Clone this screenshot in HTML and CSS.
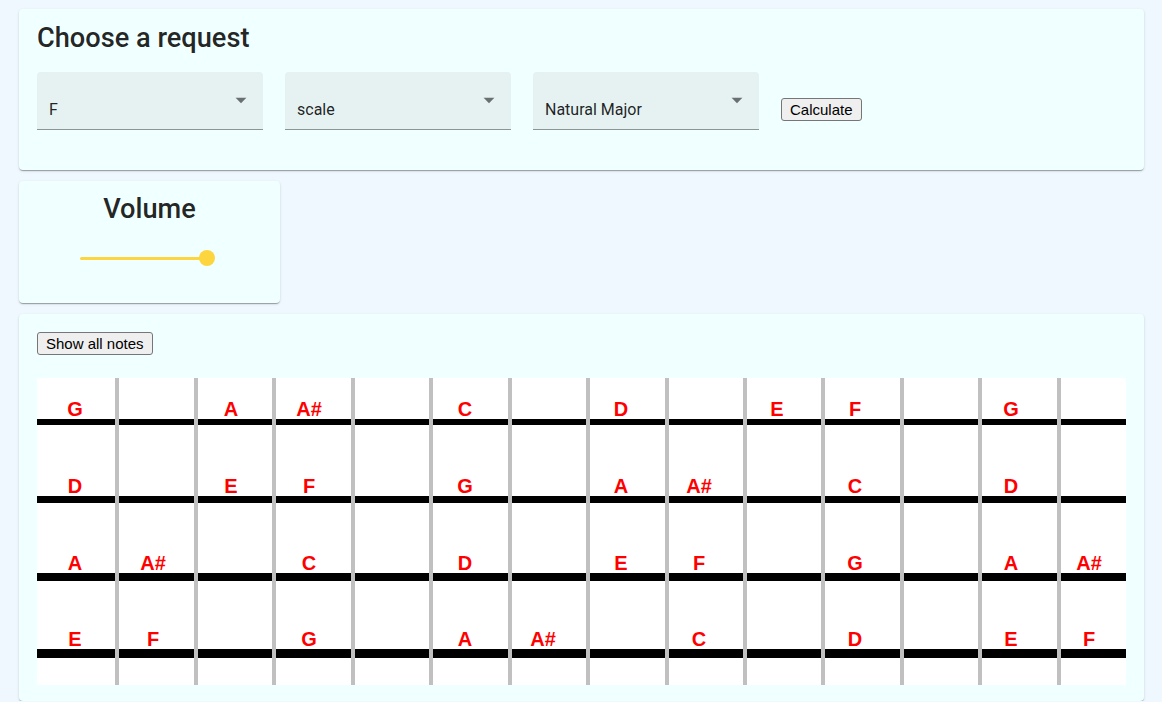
FILE: index.html
```html
<!DOCTYPE html>
<html lang="en">
<head>
<meta charset="utf-8">
<title>Fretboard</title>
<link rel="stylesheet" href="styles.css">
</head>
<body>
<div class="page">
  <section class="card card-request">
    <h2 class="card-title">Choose a request</h2>
    <div class="request-row">
      <div class="select"><span class="select-value">F</span><svg class="select-arrow" viewBox="0 0 24 24"><path d="M7 10l5 5 5-5z"/></svg></div>
      <div class="select"><span class="select-value">scale</span><svg class="select-arrow" viewBox="0 0 24 24"><path d="M7 10l5 5 5-5z"/></svg></div>
      <div class="select"><span class="select-value">Natural Major</span><svg class="select-arrow" viewBox="0 0 24 24"><path d="M7 10l5 5 5-5z"/></svg></div>
      <button class="btn">Calculate</button>
    </div>
  </section>

  <section class="card card-volume">
    <h2 class="card-title">Volume</h2>
    <div class="slider"><div class="slider-track"></div><div class="slider-thumb"></div></div>
  </section>

  <section class="card card-board">
    <button class="btn">Show all notes</button>
    <div class="board">
      <div class="string-row">
        <div class="notes"><span>G</span><span></span><span>A</span><span>A#</span><span></span><span>C</span><span></span><span>D</span><span></span><span>E</span><span>F</span><span></span><span>G</span><span></span></div>
        <div class="string string-1"></div>
      </div>
      <div class="string-row">
        <div class="notes"><span>D</span><span></span><span>E</span><span>F</span><span></span><span>G</span><span></span><span>A</span><span>A#</span><span></span><span>C</span><span></span><span>D</span><span></span></div>
        <div class="string string-2"></div>
      </div>
      <div class="string-row">
        <div class="notes notes-low"><span>A</span><span>A#</span><span></span><span>C</span><span></span><span>D</span><span></span><span>E</span><span>F</span><span></span><span>G</span><span></span><span>A</span><span>A#</span></div>
        <div class="string string-3"></div>
      </div>
      <div class="string-row">
        <div class="notes notes-low"><span>E</span><span>F</span><span></span><span>G</span><span></span><span>A</span><span>A#</span><span></span><span>C</span><span></span><span>D</span><span></span><span>E</span><span>F</span></div>
        <div class="string string-4"></div>
      </div>
      <div class="frets"><span></span><span></span><span></span><span></span><span></span><span></span><span></span><span></span><span></span><span></span><span></span><span></span><span></span><span></span></div>
    </div>
  </section>
</div>
</body>
</html>
```

FILE: styles.css
```css
html, body {
  margin: 0;
  padding: 0;
}

body {
  background: #f0f8ff;
  font-family: Roboto, "Liberation Sans", Arial, sans-serif;
  color: rgba(0, 0, 0, 0.87);
  overflow: hidden;
}

.page {
  display: flex;
  flex-direction: column;
  align-items: flex-start;
  gap: 11px;
  padding: 9px 18px 0 19px;
}

.card {
  box-sizing: border-box;
  background: #f0ffff;
  border-radius: 4px;
  box-shadow: 0 2px 1px -1px rgba(0, 0, 0, 0.2), 0 1px 1px 0 rgba(0, 0, 0, 0.14), 0 1px 3px 0 rgba(0, 0, 0, 0.12);
}

.card-title {
  margin: 0;
  font-size: 27.2px;
  font-weight: 500;
  line-height: 35px;
  color: rgba(0, 0, 0, 0.87);
}

/* request card */
.card-request {
  align-self: stretch;
  padding: 12px 18px 40px;
}

.request-row {
  display: flex;
  align-items: baseline;
  gap: 22px;
  margin-top: 16px;
}

.select {
  position: relative;
  box-sizing: border-box;
  width: 226px;
  padding: 26px 11px 8px 12px;
  font-size: 16px;
  line-height: 23px;
  background: #e6f2f2;
  border-bottom: 1px solid #8d9494;
  border-radius: 4px 4px 0 0;
  color: rgba(0, 0, 0, 0.87);
}

.select-arrow {
  position: absolute;
  right: 9px;
  top: 15px;
  width: 26px;
  height: 26px;
  fill: rgba(0, 0, 0, 0.54);
}

.btn {
  font-family: "Liberation Sans", Arial, sans-serif;
  font-size: 15px;
  line-height: 17px;
  padding: 2px 8px;
  border: 1px solid #767676;
  border-radius: 3px;
  background: #efefef;
  color: #000;
}

/* volume card */
.card-volume {
  width: 261px;
  padding: 11px 0 37px;
}

.card-volume .card-title {
  text-align: center;
}

.slider {
  position: relative;
  display: flex;
  align-items: center;
  width: 127px;
  height: 16px;
  margin: 23px 0 0 61px;
}

.slider-track {
  flex: 1;
  height: 3px;
  border-radius: 2px;
  background: #fdd63f;
}

.slider-thumb {
  position: absolute;
  right: -8px;
  top: 0;
  width: 16px;
  height: 16px;
  border-radius: 50%;
  background: #fdd63f;
}

/* fretboard card */
.card-board {
  align-self: stretch;
  display: flex;
  flex-direction: column;
  align-items: flex-start;
  padding: 18px 18px 16px;
}

.board {
  position: relative;
  align-self: stretch;
  margin-top: 23px;
  background: #fff;
  overflow: hidden;
}

.string-row {
  display: flex;
  flex-direction: column;
}

.notes {
  display: grid;
  grid-template-columns: repeat(14, 78px);
  align-items: end;
  height: 41px;
  margin-left: -1px;
  font-family: "Liberation Sans", Arial, sans-serif;
  font-weight: bold;
  font-size: 20px;
  line-height: 20px;
  color: #ff0000;
  text-align: center;
}

.notes-low {
  height: 40px;
}

.string {
  background: #000;
}

.string-1 { height: 6px; margin-bottom: 30px; }
.string-2 { height: 7px; margin-bottom: 30px; }
.string-3 { height: 8px; margin-bottom: 28px; }
.string-4 { height: 9px; margin-bottom: 27px; }

.frets {
  position: absolute;
  inset: 0;
  display: grid;
  grid-template-columns: repeat(13, 78.45px) 1fr;
}

.frets span + span {
  border-left: 4px solid #c0c0c0;
}
```
